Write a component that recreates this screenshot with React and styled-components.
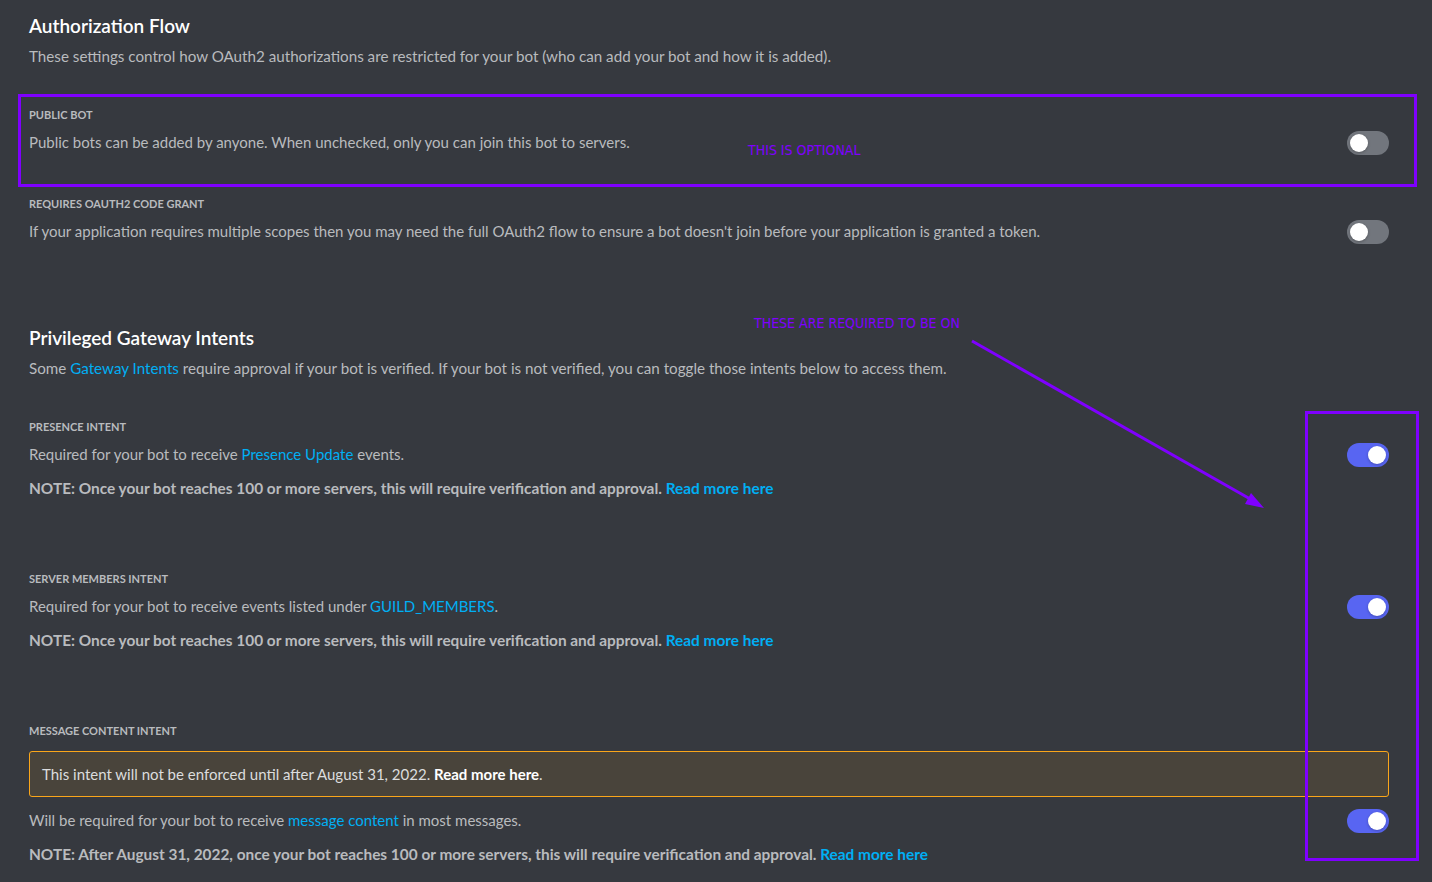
import React from "react";
import styled, { createGlobalStyle } from "styled-components";

const GlobalStyle = createGlobalStyle`
  html, body {
    margin: 0;
    padding: 0;
    background: #36393f;
  }
  body {
    font-family: Lato, "Noto Sans", "Open Sans", sans-serif;
  }
`;

const Page = styled.div`
  position: relative;
  min-height: 882px;
  box-sizing: border-box;
  padding: 14px 43px 0 29px;
  background: #36393f;
  overflow: hidden;
`;

const Heading = styled.h2`
  margin: ${(p) => (p.top ? `${p.top}px` : "0")} 0 0;
  font-size: 19px;
  line-height: 24px;
  font-weight: 600;
  color: #ffffff;
`;

const Intro = styled.p`
  margin: 8px 0 0;
  font-size: 15.2px;
  line-height: 20px;
  color: #b9bbbe;
`;

const Setting = styled.div`
  margin-top: ${(p) => p.gap}px;
`;

const Label = styled.div`
  font-size: 11px;
  line-height: 16px;
  font-weight: 700;
  text-transform: uppercase;
  color: #b9bbbe;
`;

const Body = styled.div`
  display: flex;
  align-items: flex-start;
  gap: 24px;
  margin-top: ${(p) => p.gap || 9}px;
`;

const Texts = styled.div`
  flex: 1;
`;

const Desc = styled.div`
  font-size: 15px;
  line-height: 20px;
  color: #b9bbbe;
`;

const Note = styled.div`
  margin-top: 14px;
  font-size: 15.4px;
  line-height: 20px;
  font-weight: 700;
  color: #b9bbbe;
`;

const Link = styled.a`
  color: #00aff4;
  text-decoration: none;
  font-weight: inherit;
`;

const Warning = styled.div`
  margin-top: 12px;
  box-sizing: border-box;
  height: 46px;
  display: flex;
  align-items: center;
  padding: 0 12px;
  border: 1px solid #faa61a;
  border-radius: 3px;
  background: rgba(250, 166, 26, 0.1);
  font-size: 15px;
  color: #dcddde;

  b {
    color: #ffffff;
    font-weight: 700;
  }
`;

const Track = styled.div`
  flex: none;
  position: relative;
  margin: -1px 0 -3px;
  width: 42px;
  height: 24px;
  border-radius: 12px;
  background: ${(p) => (p.on ? "#5865f2" : "#72767d")};
`;

const Knob = styled.div`
  position: absolute;
  top: 3px;
  left: ${(p) => (p.on ? "21px" : "3px")};
  width: 18px;
  height: 18px;
  border-radius: 50%;
  background: #ffffff;
  box-shadow: 0 1px 3px rgba(0, 0, 0, 0.25);
`;

const Toggle = ({ on }) => (
  <Track on={on}>
    <Knob on={on} />
  </Track>
);

const MarkBox = styled.div`
  position: absolute;
  box-sizing: border-box;
  border: 3px solid #7f00ff;
  left: ${(p) => p.x}px;
  top: ${(p) => p.y}px;
  width: ${(p) => p.w}px;
  height: ${(p) => p.h}px;
  pointer-events: none;
`;

const MarkText = styled.div`
  position: absolute;
  left: ${(p) => p.x}px;
  top: ${(p) => p.y}px;
  font-family: "DejaVu Sans Condensed", "DejaVu Sans", sans-serif;
  font-stretch: condensed;
  font-size: 14px;
  line-height: 16px;
  color: #7f00ff;
  white-space: nowrap;
`;

const Arrow = styled.svg`
  position: absolute;
  left: 0;
  top: 0;
  pointer-events: none;
`;

export default function App() {
  return (
    <>
      <GlobalStyle />
      <Page>
        <Heading>Authorization Flow</Heading>
        <Intro>
          These settings control how OAuth2 authorizations are restricted for your bot (who can add
          your bot and how it is added).
        </Intro>

        <Setting gap={41}>
          <Label>Public Bot</Label>
          <Body>
            <Texts>
              <Desc>
                Public bots can be added by anyone. When unchecked, only you can join this bot to
                servers.
              </Desc>
            </Texts>
            <Toggle />
          </Body>
        </Setting>

        <Setting gap={44}>
          <Label>Requires OAuth2 Code Grant</Label>
          <Body>
            <Texts>
              <Desc>
                If your application requires multiple scopes then you may need the full OAuth2 flow
                to ensure a bot doesn't join before your application is granted a token.
              </Desc>
            </Texts>
            <Toggle />
          </Body>
        </Setting>

        <Heading top={85}>Privileged Gateway Intents</Heading>
        <Intro>
          Some <Link>Gateway Intents</Link> require approval if your bot is verified. If your bot is
          not verified, you can toggle those intents below to access them.
        </Intro>

        <Setting gap={41}>
          <Label>Presence Intent</Label>
          <Body>
            <Texts>
              <Desc>
                Required for your bot to receive <Link>Presence Update</Link> events.
              </Desc>
              <Note>
                NOTE: Once your bot reaches 100 or more servers, this will require verification and
                approval. <Link>Read more here</Link>
              </Note>
            </Texts>
            <Toggle on />
          </Body>
        </Setting>

        <Setting gap={73}>
          <Label>Server Members Intent</Label>
          <Body>
            <Texts>
              <Desc>
                Required for your bot to receive events listed under <Link>GUILD_MEMBERS</Link>.
              </Desc>
              <Note>
                NOTE: Once your bot reaches 100 or more servers, this will require verification and
                approval. <Link>Read more here</Link>
              </Note>
            </Texts>
            <Toggle on />
          </Body>
        </Setting>

        <Setting gap={73}>
          <Label>Message Content Intent</Label>
          <Warning>
            This intent will not be enforced until after August 31, 2022.&nbsp;<b>Read more here</b>.
          </Warning>
          <Body gap={13}>
            <Texts>
              <Desc>
                Will be required for your bot to receive <Link>message content</Link> in most
                messages.
              </Desc>
              <Note>
                NOTE: After August 31, 2022, once your bot reaches 100 or more servers, this will
                require verification and approval. <Link>Read more here</Link>
              </Note>
            </Texts>
            <Toggle on />
          </Body>
        </Setting>

        <MarkBox x={18} y={94} w={1399} h={93} />
        <MarkText x={748} y={142}>THIS IS OPTIONAL</MarkText>
        <MarkText x={754} y={315}>THESE ARE REQUIRED TO BE ON</MarkText>
        <MarkBox x={1305} y={411} w={114} h={450} />
        <Arrow width="1432" height="882" viewBox="0 0 1432 882">
          <line x1="972" y1="341" x2="1252" y2="500" stroke="#7f00ff" strokeWidth="3" />
          <polygon points="1264,508 1245,504 1251,493" fill="#7f00ff" />
        </Arrow>
      </Page>
    </>
  );
}
